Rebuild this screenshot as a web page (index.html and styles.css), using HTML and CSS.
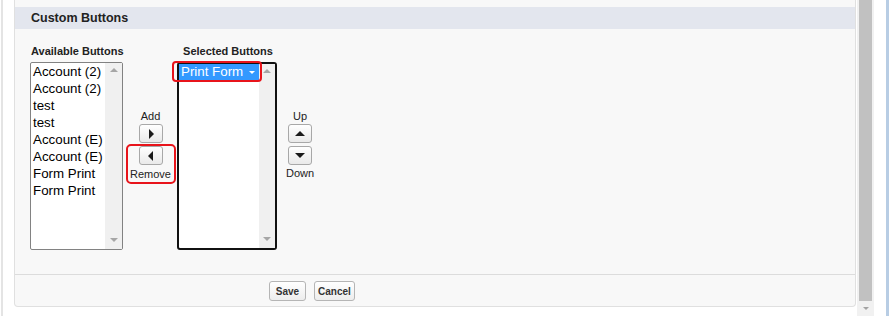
FILE: index.html
```html
<!DOCTYPE html>
<html lang="en">
<head>
    <meta charset="UTF-8">
    <meta name="viewport" content="width=device-width, initial-scale=1.0">
    <title>Custom Buttons</title>
    <link rel="stylesheet" href="styles.css">
</head>
<body>
    <div class="window">
        <div class="gutter"></div>

        <div class="panel">
            <h2 class="panel-header">Custom Buttons</h2>

            <div class="section">
                <div class="duel-list">
                    <div class="list-col available-col">
                        <div class="list-label">Available Buttons</div>
                        <div class="listbox">
                            <div class="options">
                                <div class="option">Account (2)</div>
                                <div class="option">Account (2)</div>
                                <div class="option">test</div>
                                <div class="option">test</div>
                                <div class="option">Account (E)</div>
                                <div class="option">Account (E)</div>
                                <div class="option">Form Print</div>
                                <div class="option">Form Print</div>
                            </div>
                            <div class="track">
                                <span class="track-up"></span>
                                <span class="track-down"></span>
                            </div>
                        </div>
                    </div>

                    <div class="move-col">
                        <div class="move-label">Add</div>
                        <button class="arrow-btn"><span class="tri-right"></span></button>
                        <div class="highlight-box">
                            <button class="arrow-btn"><span class="tri-left"></span></button>
                            <div class="move-label below">Remove</div>
                        </div>
                    </div>

                    <div class="list-col selected-col">
                        <div class="list-label">Selected Buttons</div>
                        <div class="listbox selected-box">
                            <div class="options">
                                <div class="option picked">Print Form <span class="tri-small"></span></div>
                            </div>
                            <div class="track">
                                <span class="track-up"></span>
                                <span class="track-down"></span>
                            </div>
                            <div class="highlight-item"></div>
                        </div>
                    </div>

                    <div class="order-col">
                        <div class="move-label">Up</div>
                        <button class="arrow-btn"><span class="tri-up"></span></button>
                        <button class="arrow-btn second"><span class="tri-down"></span></button>
                        <div class="move-label below">Down</div>
                    </div>
                </div>
            </div>

            <div class="footer">
                <button class="btn save-btn">Save</button>
                <button class="btn">Cancel</button>
            </div>
        </div>

        <div class="vscroll">
            <div class="thumb"></div>
            <span class="vscroll-down"></span>
        </div>

        <div class="edge"></div>
    </div>
</body>
</html>
```

FILE: styles.css
```css
* {
    margin: 0;
    padding: 0;
    box-sizing: border-box;
    font-family: 'Liberation Sans', Arial, sans-serif;
}

body {
    background: #fff;
    color: #222;
    overflow: hidden;
}

.window {
    display: flex;
    height: 316px;
}

.gutter {
    width: 2px;
    margin-left: 1px;
    margin-right: 11px;
    background: #e4e4e4;
}

.panel {
    width: 842px;
    height: 307px;
    background: #f8f8f8;
    border: 1px solid #e0e0e0;
    border-top: none;
    border-radius: 0 0 4px 4px;
    padding-top: 7px;
    display: flex;
    flex-direction: column;
}

.panel-header {
    flex: none;
    height: 22px;
    line-height: 22px;
    padding-left: 16px;
    background: #e3e6ee;
    font-size: 12.5px;
    font-weight: bold;
    color: #222;
}

.section {
    flex: none;
    padding: 15px 0 24px 15px;
}

.duel-list {
    display: flex;
    align-items: flex-start;
}

.list-col {
    display: flex;
    flex-direction: column;
    align-items: center;
}

.available-col {
    width: 94px;
    align-items: flex-start;
}

.available-col .list-label {
    padding-left: 1px;
}

.list-label {
    font-size: 11px;
    font-weight: bold;
    line-height: 14px;
    margin-bottom: 4px;
    white-space: nowrap;
}

.listbox {
    position: relative;
    width: 93px;
    height: 188px;
    background: #fff;
    border: 1px solid #828282;
    border-radius: 2px;
    display: flex;
}

.options {
    flex: 1;
    padding-left: 1px;
}

.option {
    font-size: 13.33px;
    line-height: 17px;
    color: #000;
    padding-left: 1px;
    white-space: nowrap;
}

.track {
    width: 17px;
    background: #f0f0f0;
    display: flex;
    flex-direction: column;
    justify-content: space-between;
    align-items: center;
    padding: 5px 0 7px;
}

.track-up,
.track-down {
    width: 0;
    height: 0;
    border-left: 4px solid transparent;
    border-right: 4px solid transparent;
}

.track-up {
    border-bottom: 4px solid #a6a6a6;
}

.track-down {
    border-top: 4px solid #a6a6a6;
}

.selected-col {
    width: 100px;
}

.selected-col .list-label {
    padding-left: 2px;
}

.selected-box {
    width: 100px;
    border: 2px solid #111;
    border-radius: 3px;
}

.selected-box .options {
    padding-left: 0;
}

.selected-box .track {
    width: 16px;
}

.option.picked {
    background: #3399ff;
    color: #fff;
    line-height: 16px;
    padding-left: 2px;
    display: flex;
    align-items: center;
}

.tri-small {
    margin-left: 6px;
    width: 0;
    height: 0;
    border-left: 3px solid transparent;
    border-right: 3px solid transparent;
    border-top: 3px solid #fff;
}

.highlight-item {
    position: absolute;
    left: -7px;
    top: -3px;
    width: 90px;
    height: 21px;
    border: 2px solid #e8141b;
    border-radius: 4px;
}

.move-col,
.order-col {
    display: flex;
    flex-direction: column;
    align-items: center;
    padding-top: 66px;
}

.move-col {
    width: 53px;
}

.order-col {
    width: 30px;
    margin-left: 8px;
}

.move-label {
    font-size: 11px;
    line-height: 13px;
    margin-bottom: 1px;
}

.move-label.below {
    margin-top: 2px;
    margin-bottom: 0;
}

.highlight-box {
    width: 50px;
    margin-top: 1px;
    border: 2px solid #e8141b;
    border-radius: 5px;
    padding-bottom: 1px;
    display: flex;
    flex-direction: column;
    align-items: center;
}

.highlight-box .move-label.below {
    margin-top: 3px;
}

.arrow-btn {
    width: 24px;
    height: 19px;
    border: 1px solid #a8a8a8;
    border-radius: 3px;
    background: linear-gradient(#ffffff, #e9e9e9);
    display: flex;
    align-items: center;
    justify-content: center;
}

.arrow-btn.second {
    margin-top: 3px;
}

.tri-right,
.tri-left {
    width: 0;
    height: 0;
    border-top: 5px solid transparent;
    border-bottom: 5px solid transparent;
}

.tri-right {
    border-left: 5px solid #1a1a1a;
    margin-left: 1px;
}

.tri-left {
    border-right: 5px solid #1a1a1a;
}

.tri-up,
.tri-down {
    width: 0;
    height: 0;
    border-left: 5px solid transparent;
    border-right: 5px solid transparent;
}

.tri-up {
    border-bottom: 5px solid #1a1a1a;
}

.tri-down {
    border-top: 5px solid #1a1a1a;
}

.footer {
    flex: none;
    height: 32px;
    border-top: 1px solid #dcdcdc;
    padding: 6px 0 0 254px;
    display: flex;
    align-items: flex-start;
    gap: 8px;
}

.btn {
    height: 20px;
    padding: 0 3px;
    border: 1px solid #b5b5b5;
    border-radius: 3px;
    background: linear-gradient(#ffffff, #ededed);
    font-size: 10px;
    font-weight: bold;
    color: #333;
}

.save-btn {
    min-width: 37px;
}

.vscroll {
    width: 17px;
    margin-left: 1px;
    background: #f1f1f1;
    display: flex;
    flex-direction: column;
    align-items: center;
}

.thumb {
    width: 13px;
    height: 301px;
    background: #c1c1c1;
}

.vscroll-down {
    margin-top: 6px;
    width: 0;
    height: 0;
    border-left: 3px solid transparent;
    border-right: 3px solid transparent;
    border-top: 3px solid #a3a3a3;
}

.edge {
    width: 3px;
    margin-left: 12px;
    background: #b8cde4;
}
```
